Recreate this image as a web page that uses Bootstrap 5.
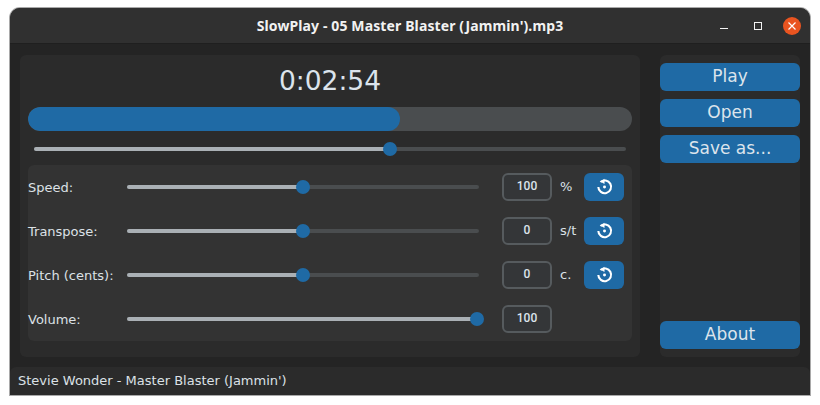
<!DOCTYPE html>
<html lang="en">
<head>
<meta charset="utf-8">
<title>SlowPlay</title>
<link rel="stylesheet" href="https://cdn.jsdelivr.net/npm/bootstrap@5.3.0/dist/css/bootstrap.min.css">
<style>
html, body { background: #fff; height: 100%; }
body { padding: 8px 10px 10px; font-family: "DejaVu Sans", sans-serif; font-size: 13px; color: #dce1e6; overflow: hidden; }
.appwin { width: 800px; height: 387px; background: #242424; border-radius: 10px 10px 0 0; box-shadow: 0 0 0 1px #a9a9a9; overflow: hidden; }
.titlebar { height: 36px; flex: none; background: #303030; border-bottom: 1px solid #1f1f1f; position: relative; }
.wintitle { font-family: "Noto Sans", sans-serif; font-weight: 700; font-size: 14px; letter-spacing: .12px; color: #f2f2f2; }
.winctl { position: absolute; top: 0; right: 9px; height: 36px; }
.ctlbox { width: 18px; height: 18px; }
.ctlclose { background: #e95420; border-radius: 50%; }
.ctlgapa { margin-right: 16px; }
.ctlgapb { margin-right: 15px; }
.mainarea { padding: 11px 10px 10px; gap: 20px; height: 323px; flex: none; }
.leftpanel { width: 620px; background: #2b2b2b; border-radius: 6px; padding: 0 8px; }
.timer { height: 52px; font-size: 26.5px; color: #dce4ec; line-height: 52px; text-align: center; }
.bigbar.progress { height: 24px; border-radius: 12px; background: #4a4d4f; }
.bigbar .progress-bar { background: #1f6aa5; border-radius: 12px; }
.track { height: 4px; border-radius: 2px; background: #4a4d4f; position: relative; }
.track-fill { height: 100%; background: #aab0b5; border-radius: 2px; }
.thumb { position: absolute; top: 50%; width: 14px; height: 14px; margin: -7px 0 0 -7px; background: #1f6aa5; border-radius: 50%; }
.seekwrap { padding: 16px 6px 14px; }
.ctlframe { background: #333; border-radius: 6px; height: 176px; }
.ctlrow { height: 44px; }
.lbl { width: 99px; padding-top: 2px; flex: none; }
.ctlrow .track { width: 352px; flex: none; margin-right: 23px; }
.numbox.form-control { width: 50px; height: 28px; flex: none; padding: 0 0 3px; background: #343638; border: 2px solid #565b5e; border-radius: 6px; color: #dce4ec; font: 500 12px/1 Roboto, sans-serif; text-align: center; }
.unit { width: 24px; margin-left: 8px; padding-bottom: 1px; flex: none; }
.resetbtn.btn { width: 40px; height: 28px; padding: 0; background: #1f6aa5; border: 0; border-radius: 6px; }
.reseticon { width: 17px; height: 17px; overflow: visible; }
.rightpanel { width: 140px; background: #2b2b2b; border-radius: 6px; padding: 8px 0; gap: 8px; }
.actbtn.btn { height: 28px; padding: 0 0 2px; background: #1f6aa5; border: 0; border-radius: 6px; color: #dce4ec; font-size: 17px; line-height: 26px; font-family: "DejaVu Sans", sans-serif; }
.statusline { height: 28px; flex: none; background: #2b2b2b; border-radius: 6px 6px 0 0; padding-left: 8px; font-size: 13px; line-height: 27px; }
.spacefill { flex: 1; }
</style>
</head>
<body>
<div class="appwin d-flex flex-column">
  <div class="titlebar d-flex align-items-center justify-content-center">
    <span class="wintitle">SlowPlay - 05 Master Blaster (Jammin').mp3</span>
    <div class="winctl d-flex align-items-center">
      <svg class="ctlbox ctlgapa" viewBox="0 0 18 18"><rect x="4" y="11" width="8" height="1" fill="#f2f2f2"/></svg>
      <svg class="ctlbox ctlgapb" viewBox="0 0 18 18"><rect x="4.5" y="5.5" width="7" height="7" fill="none" stroke="#f2f2f2" stroke-width="1"/></svg>
      <svg class="ctlbox ctlclose" viewBox="0 0 18 18"><path d="M5.5 5.5l7 7M12.5 5.5l-7 7" stroke="#fff" stroke-width="1.2" fill="none"/></svg>
    </div>
  </div>
  <div class="mainarea d-flex">
    <div class="leftpanel">
      <div class="timer">0:02:54</div>
      <div class="progress bigbar"><div class="progress-bar" style="width:61.6%"></div></div>
      <div class="seekwrap"><div class="track"><div class="track-fill" style="width:60%"></div><div class="thumb" style="left:60.1%"></div></div></div>
      <div class="ctlframe">
        <div class="ctlrow d-flex align-items-center">
          <div class="lbl">Speed:</div>
          <div class="track"><div class="track-fill" style="width:50%"></div><div class="thumb" style="left:50%"></div></div>
          <input class="form-control numbox" value="100">
          <div class="unit">%</div>
          <button class="btn resetbtn d-flex align-items-center justify-content-center"><svg class="reseticon" viewBox="0 0.7 16 16"><path d="M4.2 3.6a6 6 0 1 1-2 4.6" fill="none" stroke="#fff" stroke-width="2"/><path d="M8 0.5v5l-4-2.5z" fill="#fff"/><circle cx="8" cy="8.3" r="1.4" fill="#fff"/></svg></button>
        </div>
        <div class="ctlrow d-flex align-items-center">
          <div class="lbl">Transpose:</div>
          <div class="track"><div class="track-fill" style="width:50%"></div><div class="thumb" style="left:50%"></div></div>
          <input class="form-control numbox" value="0">
          <div class="unit">s/t</div>
          <button class="btn resetbtn d-flex align-items-center justify-content-center"><svg class="reseticon" viewBox="0 0.7 16 16"><path d="M4.2 3.6a6 6 0 1 1-2 4.6" fill="none" stroke="#fff" stroke-width="2"/><path d="M8 0.5v5l-4-2.5z" fill="#fff"/><circle cx="8" cy="8.3" r="1.4" fill="#fff"/></svg></button>
        </div>
        <div class="ctlrow d-flex align-items-center">
          <div class="lbl">Pitch (cents):</div>
          <div class="track"><div class="track-fill" style="width:50%"></div><div class="thumb" style="left:50%"></div></div>
          <input class="form-control numbox" value="0">
          <div class="unit">c.</div>
          <button class="btn resetbtn d-flex align-items-center justify-content-center"><svg class="reseticon" viewBox="0 0.7 16 16"><path d="M4.2 3.6a6 6 0 1 1-2 4.6" fill="none" stroke="#fff" stroke-width="2"/><path d="M8 0.5v5l-4-2.5z" fill="#fff"/><circle cx="8" cy="8.3" r="1.4" fill="#fff"/></svg></button>
        </div>
        <div class="ctlrow d-flex align-items-center">
          <div class="lbl">Volume:</div>
          <div class="track"><div class="track-fill" style="width:100%"></div><div class="thumb" style="left:99.4%"></div></div>
          <input class="form-control numbox" value="100">
        </div>
      </div>
    </div>
    <div class="rightpanel d-flex flex-column">
      <button class="btn actbtn">Play</button>
      <button class="btn actbtn">Open</button>
      <button class="btn actbtn">Save as...</button>
      <div class="spacefill"></div>
      <button class="btn actbtn">About</button>
    </div>
  </div>
  <div class="statusline">Stevie Wonder - Master Blaster (Jammin')</div>
</div>
</body>
</html>
